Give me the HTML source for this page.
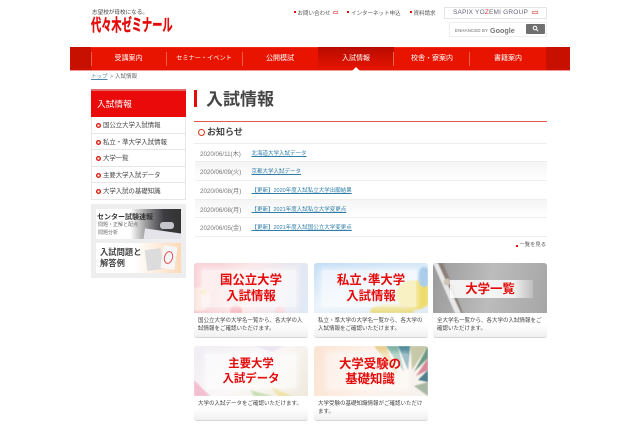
<!DOCTYPE html>
<html lang="ja"><head><meta charset="utf-8"><title>入試情報</title>
<style>
*{box-sizing:border-box;margin:0;padding:0}
html,body{width:640px;height:426px;overflow:hidden;background:#fff}
body{position:relative;font-family:"Liberation Sans","Noto Sans CJK JP",sans-serif;color:#444;filter:blur(.25px)}
.a{position:absolute;white-space:nowrap}
.nav{position:absolute;top:47px;left:70px;width:500px;height:24px;background:#e81400;border-bottom:1px solid #ef9a90;border-top:1px solid #f02a10}
.ni{position:absolute;top:47px;height:23px;line-height:24px;text-align:center;color:#fff;font-size:7px}
.sep{position:absolute;top:52px;width:1px;height:14px;background:#f2604c}
.side{position:absolute;left:91px;width:95px;border:1px solid #e6e6e6;border-top:0;background:#fff;font-size:6.4px;line-height:17px;padding-left:11px;color:#444;white-space:nowrap}
.side:before{content:"";position:absolute;left:4px;top:6px;width:5px;height:5px;border-radius:50%;background:radial-gradient(circle,#fff 0 1.1px,#d8150a 1.3px)}
.row{position:absolute;left:195px;width:352px;border-bottom:1px solid #eee;font-size:6px;line-height:21px;color:#777;white-space:nowrap;background:#fff}
.row.g{background:linear-gradient(#f5f5f5,#fff)}
.row b{font-weight:400;position:absolute;left:5px;font-size:6.2px}
.row u{position:absolute;left:56.5px;color:#2f7ea8;text-decoration:underline;font-size:5.5px}
.card{position:absolute;width:114px;height:50px;border-radius:3px 3px 0 0;overflow:hidden}
.card svg{position:absolute;left:0;top:0;filter:blur(.6px)}
.p{position:absolute;background:rgba(255,255,255,.6);box-shadow:0 0 5px 2px rgba(255,255,255,.5)}
.t{position:absolute;left:0;width:100%;text-align:center;color:#e30b0b;font-weight:700;font-size:12.4px;white-space:nowrap}
.desc{position:absolute;width:114px;height:25px;padding:4px 4px 0 4px;font-size:5.5px;line-height:8px;color:#444;background:linear-gradient(#fff 50%,#f0f0f0);border-bottom:1px solid #d5d5d5;border-radius:0 0 3px 3px;word-break:break-all}
.dot{position:absolute;width:2px;height:2px;background:#e30b0b}
.lk{position:absolute;top:9px;font-size:5.5px;color:#555;white-space:nowrap}
.ext{position:absolute;width:5px;height:3px;border:1px solid #e88}
</style></head><body>
<div class="a" style="left:92px;top:9px;font-size:5.6px;line-height:8px;color:#444">志望校が母校になる。</div>
<div class="a" style="left:91px;top:15px;font-size:17px;line-height:22px;font-weight:700;color:#e30b0b;transform:scaleX(.6);transform-origin:left;-webkit-text-stroke:.4px #e30b0b">代々木ゼミナール</div>

<div class="dot" style="left:294px;top:11px"></div>
<div class="lk" style="left:297.5px">お問い合わせ</div>
<div class="ext" style="left:333px;top:11px"></div>
<div class="dot" style="left:347px;top:11px"></div>
<div class="lk" style="left:351px">インターネット申込</div>
<div class="dot" style="left:409.5px;top:11px"></div>
<div class="lk" style="left:413.5px">資料請求</div>
<div class="a" style="left:444px;top:7px;width:103px;height:12px;border:1px solid #e4e4e4;font-size:6.5px;line-height:10px;padding-left:8px;letter-spacing:.2px;color:#667">SAPIX YO<span style="color:#d33">Z</span>EMI GROUP</div>
<div class="ext" style="left:532px;top:11px;width:6px"></div>
<div class="a" style="left:449px;top:22px;width:98px;height:15px;border:1px solid #eee"></div>
<div class="a" style="left:455px;top:28px;font-size:4.3px;line-height:6px;color:#666;letter-spacing:.2px">ENHANCED BY</div>
<div class="a" style="left:490px;top:26px;font-size:7.2px;line-height:9px;font-weight:700;color:#777">Google</div>
<div class="a" style="left:526px;top:24px;width:19px;height:10px;background:#6f6f6f;border-radius:1px"></div>
<svg class="a" style="left:532px;top:25px" width="7" height="7" viewBox="0 0 7 7"><circle cx="3" cy="3" r="1.8" fill="none" stroke="#fff"/><path d="M4.3 4.3L6.2 6.2" stroke="#fff"/></svg>

<div class="nav"></div>
<div class="a" style="left:70px;top:47px;width:21px;height:23px;background:#c81000"></div>
<div class="a" style="left:546px;top:47px;width:24px;height:23px;background:#c81000"></div>
<div class="a" style="left:318px;top:47px;width:76px;height:23px;background:linear-gradient(#b80c00,#e81400)"></div>
<div class="ni" style="left:91px;width:75px">受講案内</div>
<div class="ni" style="left:166px;width:76px;font-size:6.2px">セミナー・イベント</div>
<div class="ni" style="left:242px;width:76px">公開模試</div>
<div class="ni" style="left:318px;width:76px">入試情報</div>
<div class="ni" style="left:394px;width:76px">校舎・寮案内</div>
<div class="ni" style="left:470px;width:76px">書籍案内</div>
<div class="sep" style="left:91px"></div><div class="sep" style="left:166px"></div><div class="sep" style="left:242px"></div><div class="sep" style="left:393px"></div><div class="sep" style="left:469px"></div>
<div class="a" style="left:352px;top:67px;width:0;height:0;border-left:4px solid transparent;border-right:4px solid transparent;border-bottom:4px solid #fff"></div>

<div class="a" style="left:91px;top:73px;font-size:5.5px;line-height:8px;color:#4b87ad;text-decoration:underline">トップ</div>
<div class="a" style="left:110px;top:73px;font-size:5.5px;line-height:8px;color:#777">&gt;</div>
<div class="a" style="left:115px;top:73px;font-size:5.5px;line-height:8px;color:#666">入試情報</div>

<div class="a" style="left:91px;top:89px;width:95px;height:28px;background:#ea0a0a;border-top:2px solid #e26a6a;color:#fff;font-size:8.7px;line-height:27px;padding-left:6px">入試情報</div>
<div class="side" style="top:117px;height:17px">国公立大学入試情報</div>
<div class="side" style="top:134px;height:16px">私立・準大学入試情報</div>
<div class="side" style="top:150px;height:17px">大学一覧</div>
<div class="side" style="top:167px;height:16px">主要大学入試データ</div>
<div class="side" style="top:183px;height:17px">大学入試の基礎知識</div>

<div class="a" style="left:91px;top:204px;width:95px;height:74px;background:#eee"></div>
<div class="a" style="left:96px;top:209px;width:85px;height:30px;background:linear-gradient(90deg,#fff 40%,#8a8a8c 62%,#3c3c42 80%,#333);overflow:hidden">
<div class="a" style="left:48px;top:22px;width:38px;height:12px;background:#e4e4ea;transform:rotate(8deg)"></div>
<div class="a" style="left:64px;top:13px;width:14px;height:7px;background:#c5c5cc;border-radius:3px"></div>
<div class="a" style="left:1px;top:4px;font-size:7px;line-height:10px;font-weight:700;color:#333">センター試験速報</div>
<div class="a" style="left:2px;top:13px;font-size:5px;line-height:7.5px;color:#666">問題・正解と配点<br>問題分析</div>
</div>
<div class="a" style="left:96px;top:243px;width:85px;height:30px;background:linear-gradient(90deg,#fff 45%,#fbd9b8);overflow:hidden">
<div class="a" style="left:4px;top:4px;font-size:8.3px;line-height:11px;font-weight:700;color:#444">入試問題と<br>解答例</div>
<div class="a" style="left:50px;top:6px;width:16px;height:21px;background:#dcdcdc;transform:rotate(-8deg)"></div>
<div class="a" style="left:66px;top:3px;width:14px;height:23px;background:#f6f6f6;transform:rotate(8deg)"></div>
<div class="a" style="left:68px;top:8px;width:9px;height:13px;border:1px solid #e05050;border-radius:50%;transform:rotate(15deg)"></div>
</div>

<div class="a" style="left:194px;top:90px;width:3px;height:17px;background:#e30b0b"></div>
<div class="a" style="left:206px;top:89px;font-size:17px;line-height:21px;font-weight:700;color:#444">入試情報</div>
<div class="a" style="left:194px;top:121px;width:353px;height:1px;background:#e05a50"></div>
<div class="a" style="left:198px;top:129px;width:7px;height:7px;border-radius:50%;border:1.6px solid #dd3a10"></div>
<div class="a" style="left:207px;top:126px;font-size:9px;line-height:12px;font-weight:700;color:#444">お知らせ</div>
<div class="a" style="left:194px;top:143px;width:353px;height:1px;background:#eee"></div>
<div class="row" style="top:144px;height:18px"><b>2020/06/11(木)</b><u>北海道大学入試データ</u></div>
<div class="row g" style="top:162px;height:19px"><b>2020/06/09(火)</b><u>京都大学入試データ</u></div>
<div class="row" style="top:181px;height:19px"><b>2020/06/08(月)</b><u>【更新】2020年度入試私立大学出願結果</u></div>
<div class="row g" style="top:200px;height:18px"><b>2020/06/08(月)</b><u>【更新】2021年度入試私立大学変更点</u></div>
<div class="row" style="top:218px;height:19px"><b>2020/06/05(金)</b><u>【更新】2021年度入試国公立大学変更点</u></div>
<div class="dot" style="left:516px;top:245px"></div>
<div class="a" style="left:519.5px;top:241px;font-size:5.3px;line-height:8px;color:#555">一覧を見る</div>

<div class="card" style="left:194px;top:263px;background:linear-gradient(100deg,#f5c5cc,#fbe6e6 45%,#dfe9f7)">
<svg width="114" height="50"><circle cx="12" cy="14" r="16" fill="#f9d5da"/><circle cx="5" cy="36" r="12" fill="#fbe7e2"/><circle cx="42" cy="48" r="6" fill="#f6b8c0"/><circle cx="10" cy="29" r="3" fill="#f5d9a0"/><circle cx="86" cy="48" r="5" fill="#f8d8de"/></svg>
<div class="p" style="left:8px;top:7px;width:94px;height:37px"></div>
<div class="t" style="top:10px;line-height:15.5px">国公立大学<br>入試情報</div></div>
<div class="desc" style="left:194px;top:313px">国公立大学の大学名一覧から、各大学の入試情報をご確認いただけます。</div>

<div class="card" style="left:314px;top:263px;background:linear-gradient(170deg,#c5def6,#eaf3fb 60%,#dfeaf2)">
<svg width="114" height="50"><ellipse cx="100" cy="32" rx="18" ry="15" fill="#eedc6c"/><ellipse cx="78" cy="48" rx="22" ry="7" fill="#e9dc80"/><ellipse cx="110" cy="14" rx="6" ry="10" fill="#a9cdea"/></svg>
<div class="p" style="left:8px;top:7px;width:94px;height:37px"></div>
<div class="t" style="top:10px;line-height:15.5px">私立<span style="margin:0 -3px">・</span>準大学<br>入試情報</div></div>
<div class="desc" style="left:314px;top:313px">私立・準大学の大学名一覧から、各大学の入試情報をご確認いただけます。</div>

<div class="card" style="left:433px;top:263px;background:linear-gradient(100deg,#9a9a9a,#bcbcbc 50%,#a6a6a6)">
<svg width="114" height="50"><path d="M0 0L5 0L28 50L22 50Z" fill="#e8e8e8"/><path d="M5 0L10 0L30 50L28 50Z" fill="#8c7f7a"/><circle cx="14" cy="19" r="3.5" fill="#cfc4b8"/></svg>
<div class="p" style="left:17px;top:17px;width:83px;height:18px;background:linear-gradient(90deg,rgba(255,255,255,.85) 75%,rgba(255,255,255,.2));box-shadow:none"></div>
<div class="t" style="top:18px;line-height:16px">大学一覧</div></div>
<div class="desc" style="left:433px;top:313px">全大学名一覧から、各大学の入試情報をご確認いただけます。</div>

<div class="card" style="left:194px;top:346px;background:linear-gradient(135deg,#f0edf3,#faf7f7 50%,#efe9dc)">
<svg width="114" height="50"><path d="M0 34L16 50H0Z" fill="#f3bfd0"/><path d="M56 44L78 50H60Z" fill="#c7dfb4"/><path d="M76 40L98 50H84Z" fill="#f0e2a8"/><path d="M60 0L90 0L78 6Z" fill="#ece5f2"/></svg>
<div class="p" style="left:12px;top:8px;width:90px;height:34px"></div>
<div class="t" style="top:11px;line-height:15px;font-size:11.4px">主要大学<br>入試データ</div></div>
<div class="desc" style="left:194px;top:396px">大学の入試データをご確認いただけます。</div>

<div class="card" style="left:314px;top:346px;background:linear-gradient(100deg,#fbe4d4,#fdf2ea 50%,#f6f2ec)">
<svg width="114" height="50"><path d="M60 0L72 0L84 30Z" fill="#e8cf90"/><path d="M72 0L84 0L90 26Z" fill="#7fb3a4"/><path d="M84 0L96 0L94 24Z" fill="#4e8a9a"/><path d="M96 0L114 0L98 24Z" fill="#c6c8a8"/><path d="M114 0V12L100 26Z" fill="#6d9a86"/><path d="M114 12V24L102 30Z" fill="#d8889a"/><path d="M114 24V36L104 34Z" fill="#4d7f90"/><path d="M114 36V50L100 40Z" fill="#a8b8a4"/></svg>
<div class="p" style="left:14px;top:8px;width:80px;height:34px;background:rgba(255,255,255,.45)"></div>
<div class="t" style="top:10.5px;line-height:15px;left:-1px">大学受験の<br>基礎知識</div></div>
<div class="desc" style="left:314px;top:396px">大学受験の基礎知識情報がご確認いただけます。</div>
</body></html>
